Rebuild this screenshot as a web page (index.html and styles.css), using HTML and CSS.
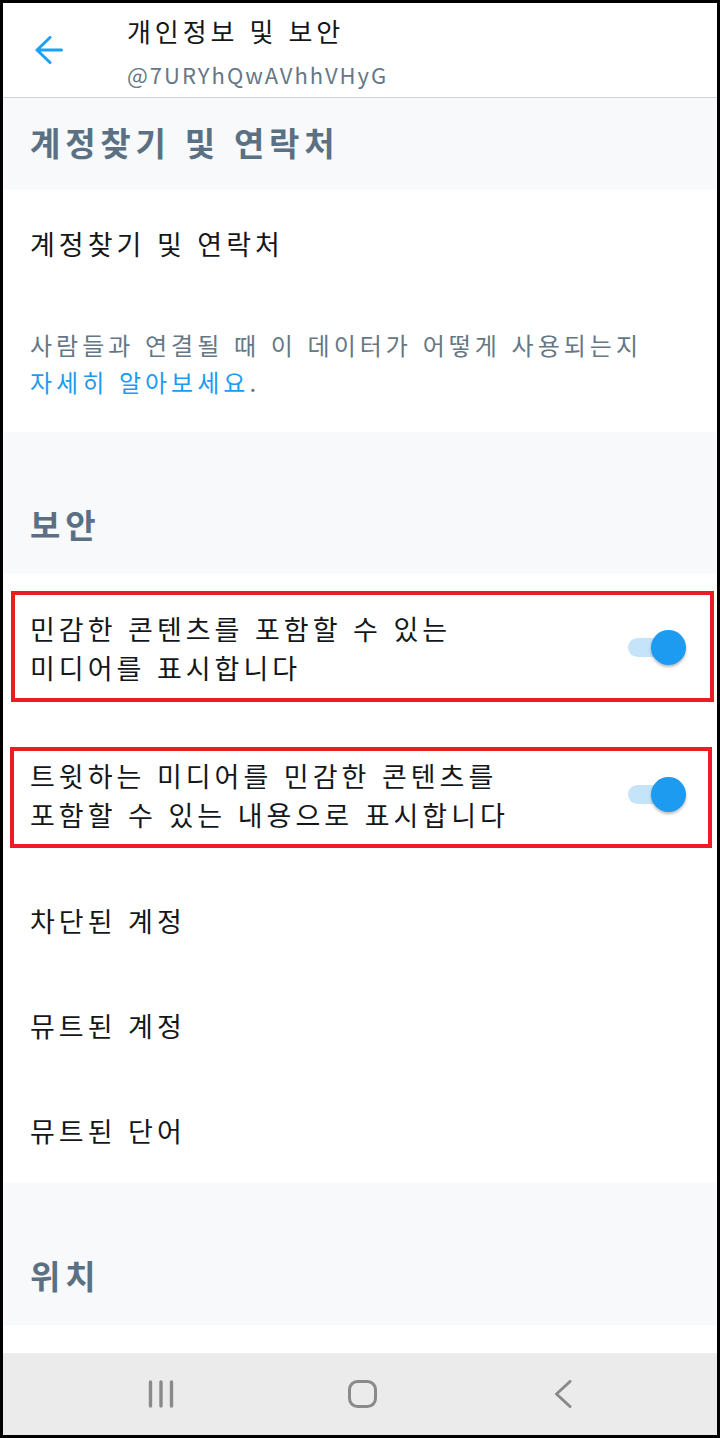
FILE: index.html
```html
<!DOCTYPE html>
<html lang="ko">
<head>
  <meta charset="UTF-8">
  <meta name="viewport" content="width=device-width, initial-scale=1.0">
  <title>개인정보 및 보안</title>
  <link rel="stylesheet" href="styles.css">
</head>
<body>
  <div class="screen">
    <header class="topbar">
      <svg class="back" viewBox="0 0 28 28" fill="none" stroke="#1da1f2" stroke-width="3" stroke-linecap="round" stroke-linejoin="round">
        <path d="M2 14H26.5M15 1.5L2 14L15 26.5"/>
      </svg>
      <div class="titles">
        <div class="title">개인정보 및 보안</div>
        <div class="handle">@7URYhQwAVhhVHyG</div>
      </div>
    </header>

    <main class="content">
      <div class="section-head">계정찾기 및 연락처</div>
      <div class="row first">계정찾기 및 연락처</div>
      <p class="note">사람들과 연결될 때 이 데이터가 어떻게 사용되는지<br><a class="link">자세히 알아보세요</a>.</p>

      <div class="section-head spaced">보안</div>
      <div class="row toggle marked">
        <span>민감한 콘텐츠를 포함할 수 있는<br>미디어를 표시합니다</span>
        <span class="switch"></span>
      </div>
      <div class="row toggle marked second">
        <span>트윗하는 미디어를 민감한 콘텐츠를<br>포함할 수 있는 내용으로 표시합니다</span>
        <span class="switch"></span>
      </div>
      <div class="row">차단된 계정</div>
      <div class="row">뮤트된 계정</div>
      <div class="row">뮤트된 단어</div>

      <div class="section-head spaced">위치</div>
    </main>

    <nav class="navbar">
      <div class="nav-btn">
        <svg width="26" height="28" viewBox="0 0 26 28" fill="none" stroke="#8a8a8a" stroke-width="3.4" stroke-linecap="round">
          <path d="M2.5 2V26M13 2V26M23.5 2V26"/>
        </svg>
      </div>
      <div class="nav-btn">
        <svg width="29" height="28" viewBox="0 0 29 28" fill="none" stroke="#8a8a8a" stroke-width="3">
          <rect x="1.5" y="1.5" width="26" height="25" rx="8"/>
        </svg>
      </div>
      <div class="nav-btn">
        <svg width="18" height="28" viewBox="0 0 18 28" fill="none" stroke="#8a8a8a" stroke-width="3" stroke-linecap="round" stroke-linejoin="round">
          <path d="M16 1.5L2.5 14L16 26.5"/>
        </svg>
      </div>
    </nav>
  </div>
</body>
</html>
```

FILE: styles.css
```css
* {
  box-sizing: border-box;
}
body {
  margin: 0;
  background-color: #000;
  font-family: "Noto Sans CJK KR", "Noto Sans", sans-serif;
}
.screen {
  width: 720px;
  height: 1438px;
  border: 3px solid #000;
  background-color: #fff;
  display: flex;
  flex-direction: column;
  overflow: hidden;
}
.topbar {
  height: 95px;
  flex-shrink: 0;
  display: flex;
  align-items: center;
  border-bottom: 1px solid #cfd3d6;
}
.back {
  width: 28px;
  height: 28px;
  margin-left: 32px;
  margin-right: 64px;
  flex-shrink: 0;
}
.titles {
  padding-top: 4px;
}
.title {
  font-size: 26px;
  line-height: 36px;
  letter-spacing: 3.9px;
  color: #14171a;
}
.handle {
  margin-top: 8px;
  font-size: 22px;
  line-height: 34px;
  letter-spacing: 2px;
  color: #657786;
}
.content {
  flex: 1;
  overflow: hidden;
}
.section-head {
  background-color: #f7f9fa;
  padding: 22px 27px 26px;
  font-size: 33px;
  line-height: 44px;
  font-weight: 700;
  letter-spacing: 4.8px;
  color: #5b7083;
}
.section-head.spaced {
  padding-top: 70px;
  padding-bottom: 28px;
}
.row {
  height: 105px;
  padding: 0 27px;
  display: flex;
  align-items: center;
  font-size: 27px;
  line-height: 39px;
  letter-spacing: 4px;
  color: #14171a;
}
.row.first {
  height: 106px;
}
.note {
  margin: 0;
  padding: 30px 27px 32px;
  font-size: 24px;
  line-height: 37px;
  letter-spacing: 4px;
  color: #657786;
}
.link {
  color: #1d9bf0;
}
.row.toggle {
  height: 147px;
  justify-content: space-between;
  padding-right: 31px;
  position: relative;
}
.marked::after {
  content: "";
  position: absolute;
  top: 17px;
  bottom: 19px;
  left: 8px;
  right: 3px;
  border: 4px solid #ec1c24;
}
.marked.second::after {
  top: 26px;
  bottom: 20px;
  left: 7px;
  right: 5px;
}
.switch {
  position: relative;
  width: 58px;
  height: 35px;
  flex-shrink: 0;
}
.switch::before {
  content: "";
  position: absolute;
  left: 0;
  top: 8px;
  width: 50px;
  height: 19px;
  border-radius: 10px;
  background-color: #c5e4fa;
}
.switch::after {
  content: "";
  position: absolute;
  right: 0;
  top: 0;
  width: 35px;
  height: 35px;
  border-radius: 50%;
  background-color: #1d9bf0;
  box-shadow: 0 2px 3px rgba(0,0,0,0.28);
}
.navbar {
  height: 82px;
  flex-shrink: 0;
  background-color: #ebebeb;
  display: flex;
  justify-content: center;
  align-items: center;
  padding-left: 4px;
}
.nav-btn {
  width: 201px;
  display: flex;
  justify-content: center;
}
.nav-btn svg {
  display: block;
}
```
